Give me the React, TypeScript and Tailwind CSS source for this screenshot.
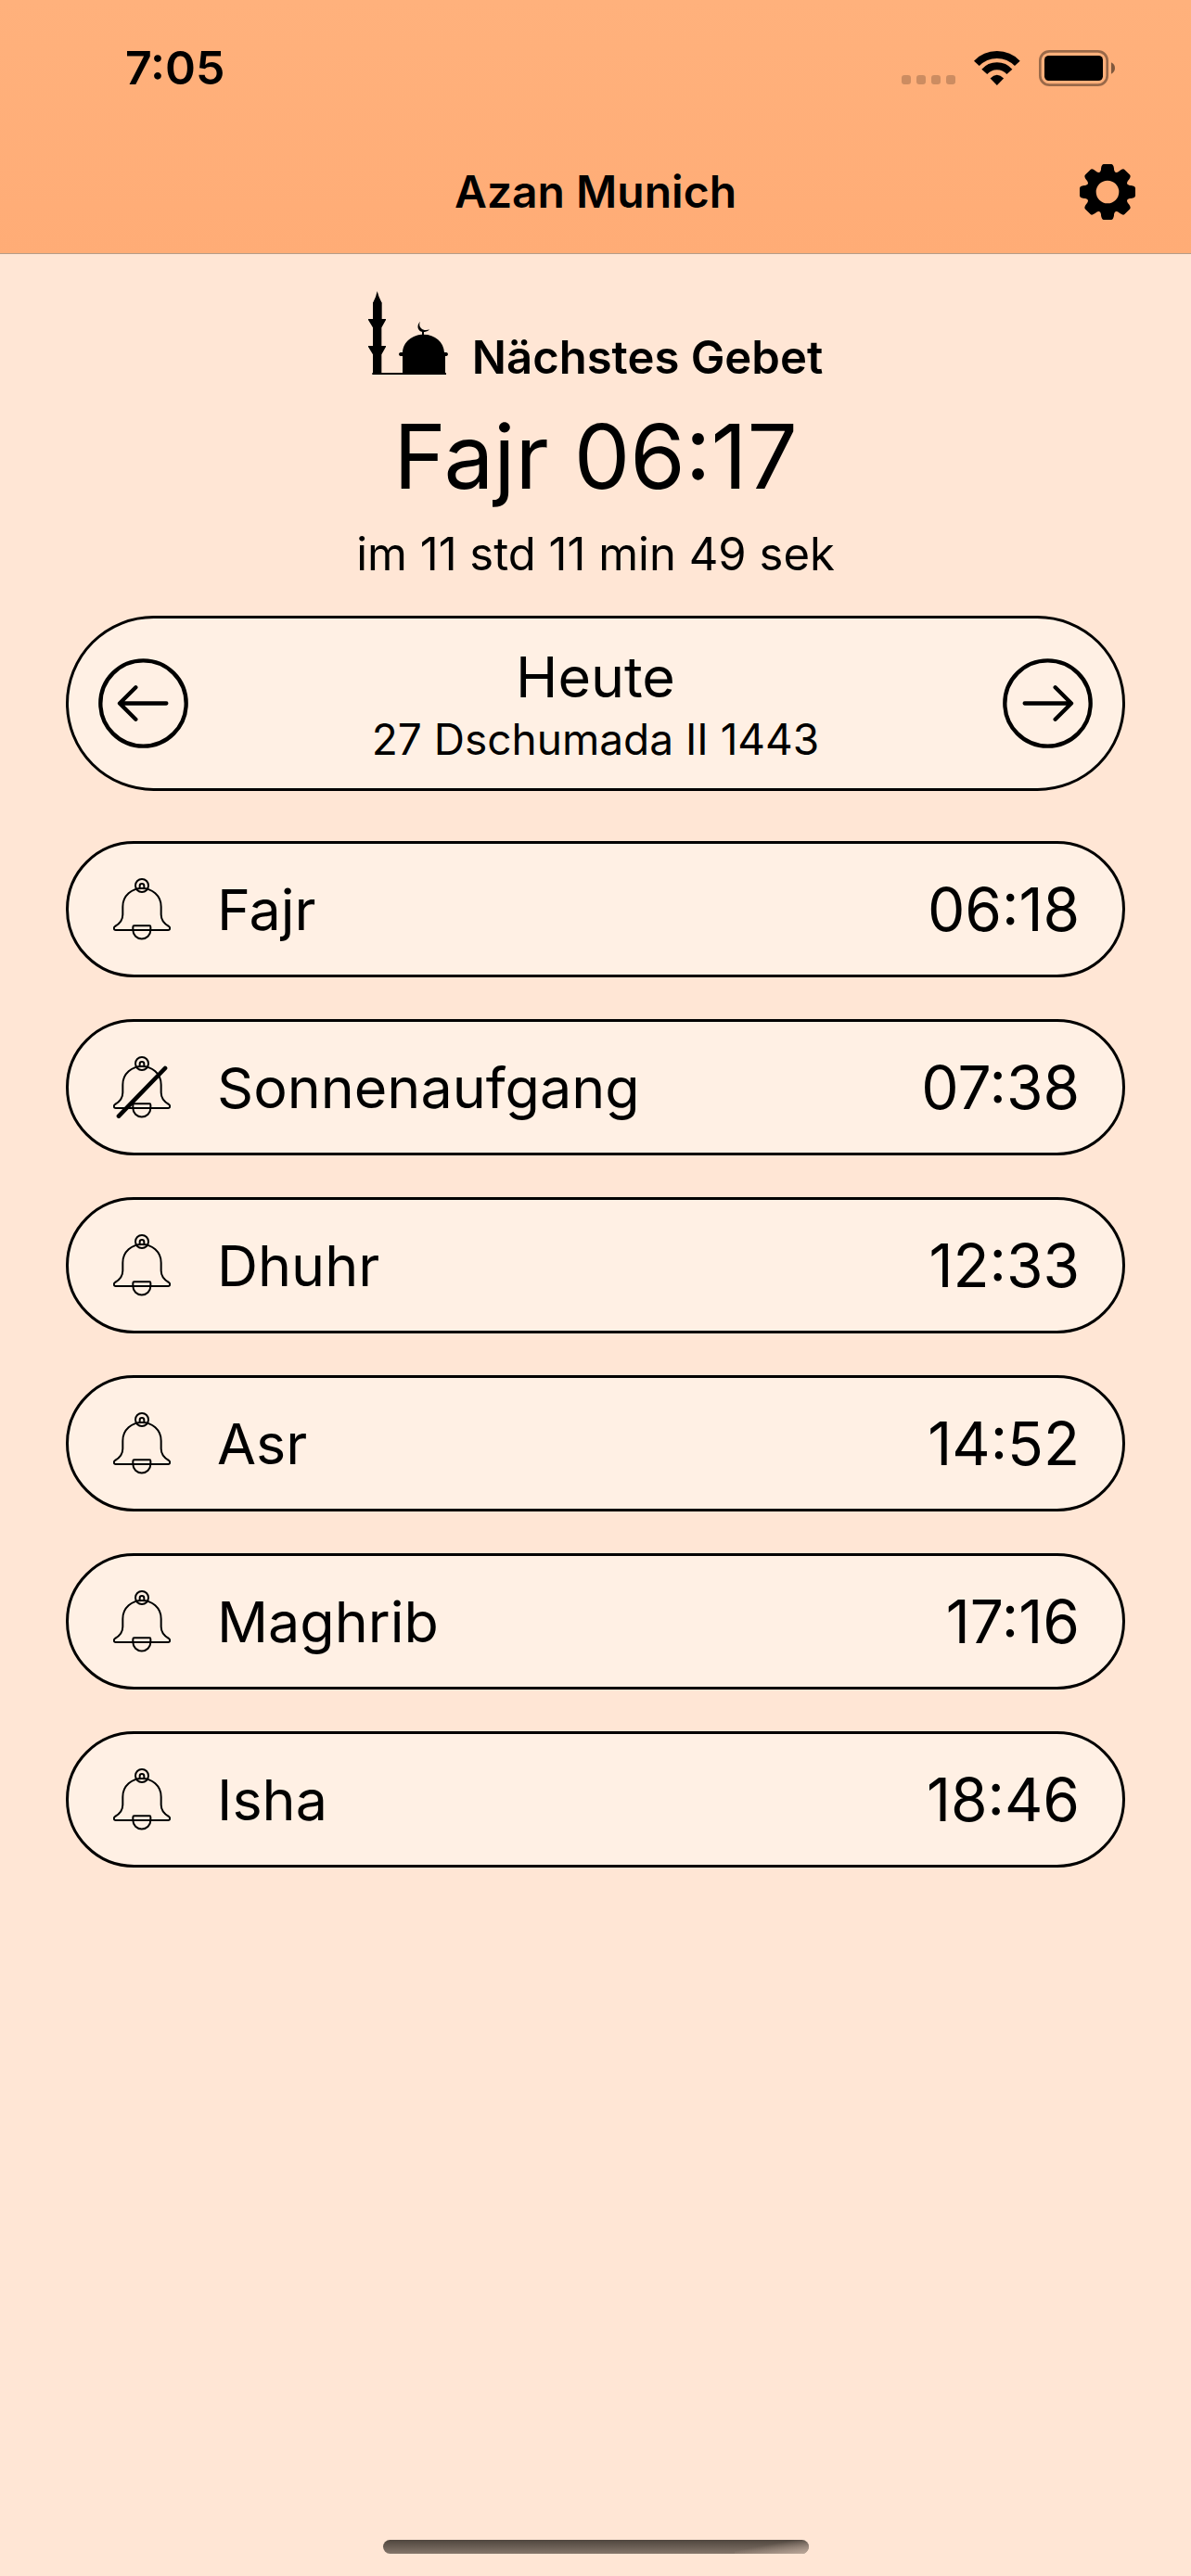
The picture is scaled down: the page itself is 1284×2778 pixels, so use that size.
import React from "react";

type Prayer = { name: string; time: string; muted?: boolean };

const prayers: Prayer[] = [
  { name: "Fajr", time: "06:18" },
  { name: "Sonnenaufgang", time: "07:38", muted: true },
  { name: "Dhuhr", time: "12:33" },
  { name: "Asr", time: "14:52" },
  { name: "Maghrib", time: "17:16" },
  { name: "Isha", time: "18:46" },
];

function CellularDots() {
  return (
    <div className="flex gap-[6px] pb-[2px]">
      {[0, 1, 2, 3].map((i) => (
        <span key={i} className="size-[10px] rounded-[3px] bg-black/20" />
      ))}
    </div>
  );
}

function WifiIcon() {
  return (
    <svg viewBox="331 71 151 112" className="h-[37px] w-[50px]" aria-hidden="true">
      <g fill="none" stroke="#000" strokeWidth="24">
        <path d="M339.500 111.500A92 92 0 0 1 472.500 111.500" />
        <path d="M365 139A54.500 54.500 0 0 1 447 139" />
      </g>
      <path d="M384 160Q406 138 428 160L406 183Z" />
    </svg>
  );
}

function BatteryIcon() {
  return (
    <svg viewBox="540 69 246 117" className="h-[39px] w-[82px]" aria-hidden="true">
      <rect x="544" y="73" width="217" height="109" rx="30" fill="none" stroke="#000" strokeOpacity="0.4" strokeWidth="8" />
      <rect x="558" y="87" width="189" height="81" rx="14" />
      <path d="M774 109Q786 115 786 127.500T774 146Z" fillOpacity="0.5" />
    </svg>
  );
}

function GearIcon() {
  return (
    <svg viewBox="-90 -90 180 180" className="size-[60px]" aria-hidden="true">
      <circle r="52" fill="none" stroke="#000" strokeWidth="30" />
      {[0, 45, 90, 135, 180, 225, 270, 315].map((a) => (
        <path
          key={a}
          transform={`rotate(${a})`}
          d="M-30 -60Q-21 -66 -21 -72V-76Q-19 -90 -12 -90H12Q19 -90 21 -76V-72Q21 -66 30 -60L16 -48H-16Z"
        />
      ))}
    </svg>
  );
}

function MosqueIcon() {
  return (
    <svg viewBox="78 72 258 270" className="h-[90px] w-[86px]" aria-hidden="true">
      <path d="M107 72Q112 92 121 108H122V162H135V165L121 190V249H135V252L121 277V336H189V282H182Q177 281 177 276T182 270H189C191 236 220 212 257 212S322 236 324 270H331Q336 271 336 276T331 282H327V336H330V342H91V336H93V277L78 252V249H93V190L78 165V162H93V108H94Q103 92 107 72Z" />
      <path d="M252 202H258V214H252Z" />
      <path d="M246 170C232 183 238 206 260 204C268 203 273 200 276 196C268 199 256 200 249 192C243 186 242 178 246 170Z" />
    </svg>
  );
}

function BellIcon({ muted }: { muted?: boolean }) {
  return (
    <svg viewBox="186 170 186 201" className="h-[67px] w-[62px]" aria-hidden="true">
      <g fill="none" stroke="#000" strokeWidth="6" strokeLinecap="round" strokeLinejoin="round">
        <circle cx="279" cy="194" r="21" />
        <path d="M272 203V195A7 7 0 0 1 286 195V203" />
        <path d="M194 338C187 338 187 329 192 326C212 315 217 302 217 288V262C217 226 247 203 279 203S341 226 341 262V288C341 302 346 315 366 326C371 329 371 338 364 338Z" />
        <path d="M254 324H304Q307 324 307 328V338A28.500 28.500 0 0 1 250 338V328Q250 324 254 324Z" />
        {muted && <path d="M354 209L204 364" strokeWidth="14" />}
      </g>
    </svg>
  );
}

function ArrowCircle({ flip }: { flip?: boolean }) {
  return (
    <svg viewBox="0 0 291 291" className={flip ? "size-[97px] -scale-x-100" : "size-[97px]"} aria-hidden="true">
      <g fill="none" stroke="#000" strokeWidth="13" strokeLinecap="round" strokeLinejoin="round">
        <circle cx="145.500" cy="145.500" r="138.500" />
        <path d="M220 145.500H70M121 94L69 145.500L121 197" />
      </g>
    </svg>
  );
}

export default function App() {
  return (
    <div className="flex min-h-screen flex-col bg-[#ffe6d5] font-['Inter',sans-serif] text-black">
      <header className="border-b border-[#b59c88] bg-linear-to-b from-[#ffb17c] to-[#ffac76]">
        <div className="flex h-[146px] items-center justify-between pr-[82px] pl-[135px]">
          <span className="text-[50px] leading-[60px] font-semibold">7:05</span>
          <div className="flex items-end">
            <CellularDots />
            <div className="flex items-center gap-5 pl-5">
              <WifiIcon />
              <BatteryIcon />
            </div>
          </div>
        </div>
        <div className="grid h-[127px] grid-cols-[1fr_auto_1fr] items-center px-[60px] pb-[5px]">
          <h1 className="col-start-2 text-[48px] leading-[60px] font-semibold">Azan Munich</h1>
          <button type="button" aria-label="Einstellungen" className="justify-self-end">
            <GearIcon />
          </button>
        </div>
      </header>

      <main className="px-[71px] pt-10">
        <section className="flex flex-col items-center">
          <div className="flex items-end gap-[26px]">
            <MosqueIcon />
            <h2 className="-mb-3 text-[49px] leading-[60px] font-semibold">Nächstes Gebet</h2>
          </div>
          <p className="mt-7 text-[96px] leading-[120px]">Fajr 06:17</p>
          <p className="mt-4 text-[49px] leading-[60px]">im 11 std 11 min 49 sek</p>
        </section>

        <section className="mt-9 flex h-[189px] items-center justify-between rounded-full border-3 border-black bg-[#fff0e4] px-8">
          <button type="button" aria-label="Vorheriger Tag">
            <ArrowCircle />
          </button>
          <div className="flex flex-col items-center">
            <h3 className="text-[61px] leading-[76px]">Heute</h3>
            <p className="text-[46px] leading-[58px]">27 Dschumada II 1443</p>
          </div>
          <button type="button" aria-label="Nächster Tag">
            <ArrowCircle flip />
          </button>
        </section>

        <ul className="mt-[54px] flex flex-col gap-[45px]">
          {prayers.map((p) => (
            <li
              key={p.name}
              className="flex h-[147px] items-center rounded-full border-3 border-black bg-[#fff0e4] pr-[46px] pl-12 leading-[76px]"
            >
              <button type="button" aria-label={`Benachrichtigung ${p.name}`} aria-pressed={!p.muted}>
                <BellIcon muted={p.muted} />
              </button>
              <span className="ml-[50px] flex-1 text-[61px]">{p.name}</span>
              <time className="text-[64px]">{p.time}</time>
            </li>
          ))}
        </ul>
      </main>

      <footer className="mt-auto flex justify-center pb-6">
        <div className="flex h-[15px] w-[459px] justify-end overflow-hidden rounded-full bg-linear-to-b from-[#4f463e] to-[#85766b]">
          <div className="w-20 bg-linear-to-br from-transparent from-40% to-[#bda99b]" />
        </div>
      </footer>
    </div>
  );
}
